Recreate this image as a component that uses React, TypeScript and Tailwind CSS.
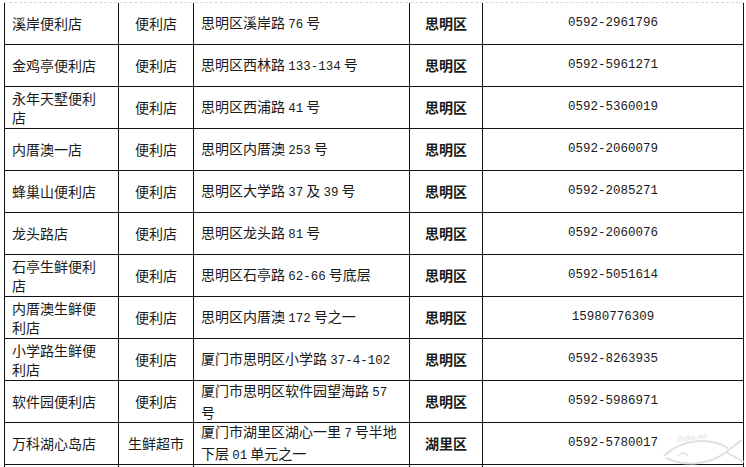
const rows: [string[], string, string[], string, string][] = [
  [['溪岸便利店'], '便利店', ['思明区溪岸路 76 号'], '思明区', '0592-2961796'],
  [['金鸡亭便利店'], '便利店', ['思明区西林路 133-134 号'], '思明区', '0592-5961271'],
  [['永年天墅便利', '店'], '便利店', ['思明区西浦路 41 号'], '思明区', '0592-5360019'],
  [['内厝澳一店'], '便利店', ['思明区内厝澳 253 号'], '思明区', '0592-2060079'],
  [['蜂巢山便利店'], '便利店', ['思明区大学路 37 及 39 号'], '思明区', '0592-2085271'],
  [['龙头路店'], '便利店', ['思明区龙头路 81 号'], '思明区', '0592-2060076'],
  [['石亭生鲜便利', '店'], '便利店', ['思明区石亭路 62-66 号底层'], '思明区', '0592-5051614'],
  [['内厝澳生鲜便', '利店'], '便利店', ['思明区内厝澳 172 号之一'], '思明区', '15980776309'],
  [['小学路生鲜便', '利店'], '便利店', ['厦门市思明区小学路 37-4-102'], '思明区', '0592-8263935'],
  [['软件园便利店'], '便利店', ['厦门市思明区软件园望海路 57', '号'], '思明区', '0592-5986971'],
  [['万科湖心岛店'], '生鲜超市', ['厦门市湖里区湖心一里 7 号半地', '下层 01 单元之一'], '湖里区', '0592-5780017'],
];

// digits in the source are narrow, so set them in a mono face
function Mixed({ text }: { text: string }) {
  const parts = text.split(/([0-9][0-9\-]*)/);
  return (
    <>
      {parts.map((p, i) =>
        /^[0-9]/.test(p) ? (
          <span key={i} className="font-['Liberation_Mono',monospace] text-[12.5px]">{p}</span>
        ) : (
          <span key={i}>{p}</span>
        )
      )}
    </>
  );
}

function Lines({ lines }: { lines: string[] }) {
  return (
    <div className="leading-[19px]">
      {lines.map((l, i) => (
        <div key={i}><Mixed text={l} /></div>
      ))}
    </div>
  );
}

const cell = 'h-[42px] border-r border-b border-[#111] flex items-center';

export default function App() {
  return (
    <div className="relative w-[746px] h-[467px] overflow-hidden bg-white font-['Noto_Sans_CJK_SC',sans-serif] text-[14px] text-[#1a1a1a]">
      <div className="h-[2px]" />
      <div className="ml-[4px] w-[740px] grid grid-cols-[115px_75px_216px_73px_261px] border-t border-dashed border-[#d8d8d8]">
        {rows.map(([name, type, addr, area, phone], i) => (
          <div key={i} className="contents">
            <div className={`${cell} border-l pl-[7px]`}>
              <Lines lines={name} />
            </div>
            <div className={`${cell} justify-center`}>{type}</div>
            <div className={`${cell} pl-[7px]`}>
              <Lines lines={addr} />
            </div>
            <div className={`${cell} justify-center font-bold`}>{area}</div>
            <div className={`${cell} justify-center font-['Liberation_Mono',monospace] text-[12.5px]`}>{phone}</div>
          </div>
        ))}
        <div className="h-[10px] border-l border-r border-[#111]" />
        <div className="h-[10px] border-r border-[#111]" />
        <div className="h-[10px] border-r border-[#111]" />
        <div className="h-[10px] border-r border-[#111]" />
        <div className="h-[10px] border-r border-[#111]" />
      </div>

      {/* faint watermark, bottom right */}
      <svg className="absolute left-[660px] top-[424px]" width="86" height="43" viewBox="0 0 86 43" fill="none">
        <path d="M4 32 C 20 16, 48 12, 68 24" stroke="#e0e0e0" strokeWidth="2" />
        <path d="M6 34 C 24 43, 50 41, 66 28 L 82 16" stroke="#e0e0e0" strokeWidth="2" />
        <path d="M66 28 L 84 38" stroke="#e0e0e0" strokeWidth="2" />
        <path d="M18 32 C 22 28, 26 28, 28 32" stroke="#e4e4e4" strokeWidth="1.5" />
        <text x="16" y="16" fontSize="8" fill="#dcdcdc" transform="rotate(-8 32 14)" fontFamily="Liberation Serif, serif">dbzhu.net</text>
      </svg>
    </div>
  );
}
